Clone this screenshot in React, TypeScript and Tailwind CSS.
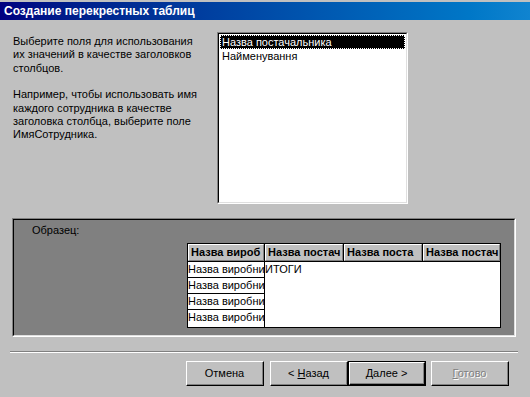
const font = "font-['Liberation_Sans',Arial,sans-serif]";

function Btn({ children, primary, disabled }: { children: React.ReactNode; primary?: boolean; disabled?: boolean }) {
  return (
    <div className={`h-[25px] w-[78px] ${primary ? "border border-black" : ""}`}>
      <div className="h-full w-full border-b border-l border-r border-t border-white border-b-[#000] border-r-[#000]">
        <div className="flex h-full w-full items-center justify-center border-b border-r border-[#808080] bg-[#c0c0c0]">
          <span className={`text-[11px] ${disabled ? "text-[#808080] [text-shadow:1px_1px_0_#fff]" : "text-black"}`}>{children}</span>
        </div>
      </div>
    </div>
  );
}

function HeadCell({ label, w }: { label: string; w: string }) {
  return (
    <div className={`${w} h-[17px] border-r border-black last:border-r-0`}>
      <div className="h-full overflow-hidden whitespace-nowrap border-b border-l border-r border-t border-white border-b-[#808080] border-r-[#808080] bg-[#c0c0c0] pl-[2px] text-[11px] font-bold leading-[14px] text-black">
        {label}
      </div>
    </div>
  );
}

export default function App() {
  return (
    <div className={`${font} flex h-[397px] w-[530px] flex-col bg-[#c0c0c0] text-black`}>
      {/* title bar */}
      <div className="mt-[2px] flex h-[18px] items-center bg-gradient-to-r from-[#000080] to-[#1084d0] pl-[4px]">
        <span className="text-[12px] font-bold text-white">Создание перекрестных таблиц</span>
      </div>

      {/* top section */}
      <div className="flex h-[198px]">
        <div className="w-[204px] pl-[13px] pt-[15px] text-[11px] leading-[13.4px]">
          <p>Выберите поля для использования их значений в качестве заголовков столбцов.</p>
          <p className="mt-[13px]">Например, чтобы использовать имя каждого сотрудника в качестве заголовка столбца, выберите поле ИмяСотрудника.</p>
        </div>
        <div className="ml-[13px] mt-[12px] h-[172px] w-[191px] border-b border-l border-r border-t border-[#808080] border-b-white border-r-white">
          <div className="h-full w-full border-b border-l border-r border-t border-black border-b-[#dfdfdf] border-r-[#dfdfdf] bg-white p-[1px]">
            <div className="h-[14px] border border-dotted border-white bg-black pl-[1px] text-[11px] leading-[12px] text-white">Назва постачальника</div>
            <div className="h-[14px] pl-[2px] text-[11px] leading-[14px]">Найменування</div>
          </div>
        </div>
      </div>

      {/* sample panel */}
      <div className="ml-[12px] h-[119px] w-[504px] border-b border-l border-r border-t border-[#808080] border-b-white border-r-white">
        <div className="h-full w-full border-b border-l border-r border-t border-black border-b-[#dfdfdf] border-r-[#dfdfdf] bg-[#808080]">
          <div className="pl-[18px] pt-[3px] text-[11px] leading-[14px]">Образец:</div>
          <div className="ml-[173px] mt-[6px] w-[314px]">
            <div className="flex border border-black">
              <HeadCell label="Назва вироб" w="w-[77px]" />
              <HeadCell label="Назва постач" w="w-[79px]" />
              <HeadCell label="Назва поста" w="w-[79px]" />
              <HeadCell label="Назва постач" w="w-[77px]" />
            </div>
            <div className="flex h-[66px] border-b border-l border-r border-black bg-white">
              <div className="flex w-[77px] shrink-0 flex-col border-r border-black">
                {[0, 1, 2, 3].map((i) => (
                  <div key={i} className="h-[16px] overflow-hidden whitespace-nowrap border-b border-black text-[11px] leading-[15px] last:h-[17px] last:border-b-0">
                    Назва виробни
                  </div>
                ))}
              </div>
              <div className="text-[11px] leading-[15px]">ИТОГИ</div>
            </div>
          </div>
        </div>
      </div>

      {/* separator */}
      <div className="ml-[10px] mt-[14px] w-[508px] border-b border-t border-[#808080] border-b-white" />

      {/* buttons */}
      <div className="ml-[186px] mt-[8px] flex">
        <Btn>Отмена</Btn>
        <div className="ml-[6px]">
          <Btn>
            &lt; <u>Н</u>азад
          </Btn>
        </div>
        <Btn primary>
          <u>Д</u>алее &gt;
        </Btn>
        <div className="ml-[5px]">
          <Btn disabled>
            <u>Г</u>отово
          </Btn>
        </div>
      </div>
    </div>
  );
}
